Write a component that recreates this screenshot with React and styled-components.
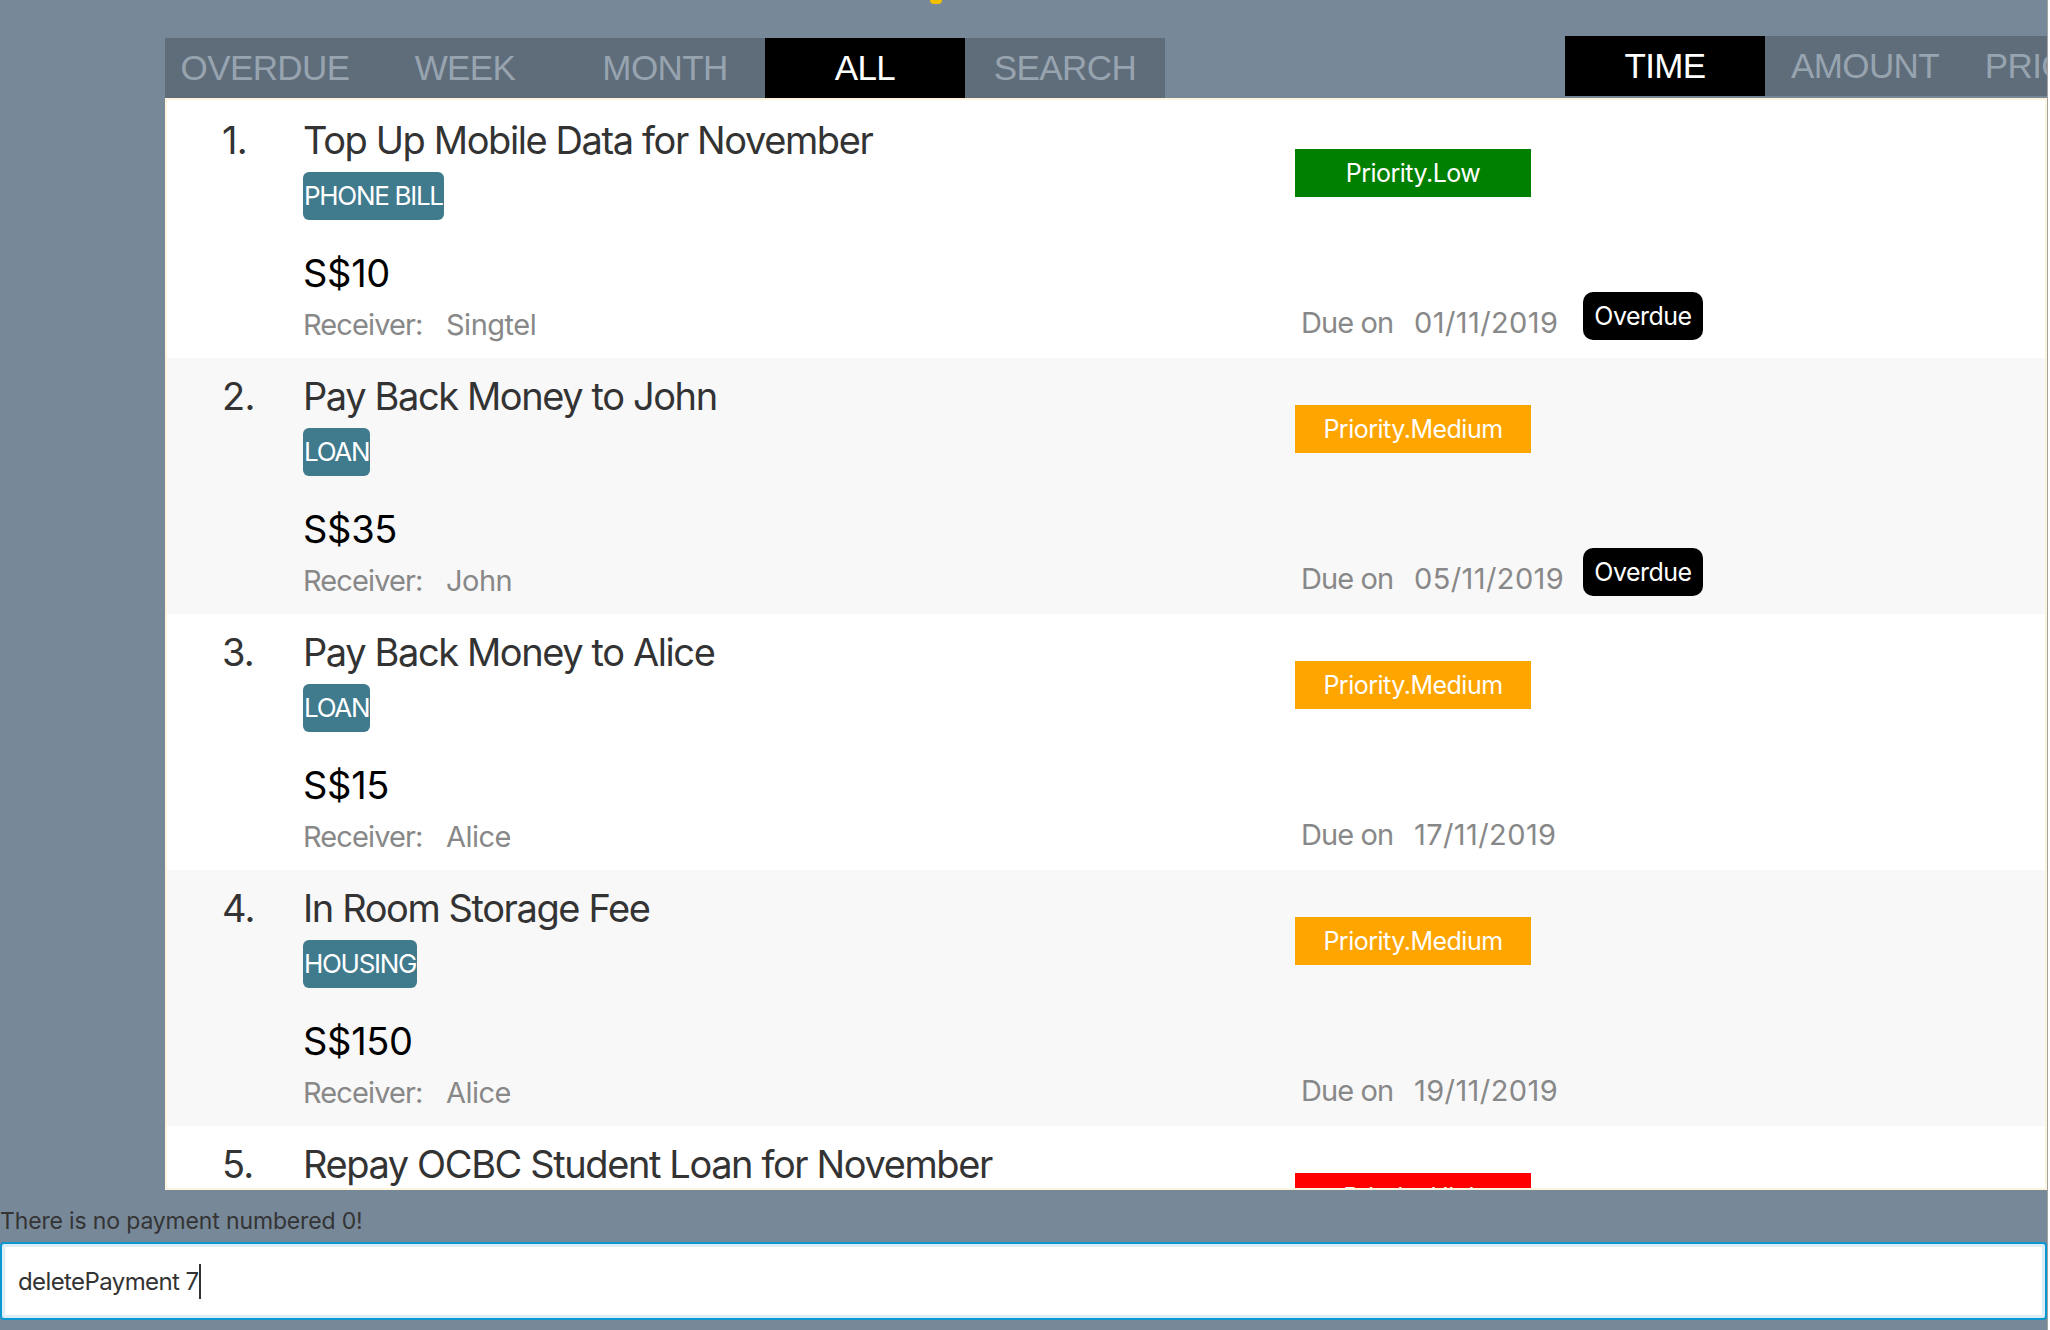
import React from 'react';
import styled, { createGlobalStyle } from 'styled-components';

const GlobalStyle = createGlobalStyle`
  html, body { margin: 0; padding: 0; background: #ffffff; }
  body { font-family: Inter, "Noto Sans", sans-serif; }
  * { box-sizing: border-box; }
`;

const Frame = styled.div`
  width: 2048px;
  height: 1330px;
  background: #778899;
  overflow: hidden;
  border-right: 1px solid #a3a3a3;
  display: flex;
  flex-direction: column;
`;

const Header = styled.div`
  flex: none;
  height: 36px;
  padding-left: 930px;
`;

const TitleTick = styled.div`
  width: 12px;
  height: 4px;
  background: #f2c200;
  border-radius: 0 0 7px 7px;
`;

const TabRow = styled.div`
  flex: none;
  height: 62px;
  display: flex;
  align-items: flex-start;
  padding-left: 165px;
  overflow: hidden;
`;

const TabBar = styled.div`
  flex: none;
  display: flex;
  background: #5f6d7a;
  margin-top: ${(p) => (p.$offset ? '2px' : '0')};
  margin-left: ${(p) => p.$gap || '0px'};
`;

const Tab = styled.div`
  width: 200px;
  height: 60px;
  display: flex;
  align-items: center;
  justify-content: center;
  font-family: "Liberation Sans", Arial, sans-serif;
  font-size: 35px;
  letter-spacing: -0.6px;
  color: ${(p) => (p.$active ? '#ffffff' : '#97a4b0')};
  background: ${(p) => (p.$active ? '#000000' : 'transparent')};
`;

const Panel = styled.div`
  flex: 1;
  margin-left: 165px;
  background: #ffffff;
  border: 2px solid #fcf4dc;
  padding-top: 2px;
  overflow: hidden;
  min-height: 0;
`;

const Row = styled.div`
  height: 256px;
  display: grid;
  grid-template-columns: 81px 992px 1fr;
  padding-left: 55px;
  background: ${(p) => (p.$alt ? '#f8f8f8' : '#ffffff')};
`;

const Index = styled.div`
  padding-top: 15px;
  font-size: 38px;
  line-height: 46px;
  color: #333333;
  letter-spacing: -0.8px;
`;

const Main = styled.div`
  display: flex;
  flex-direction: column;
  align-items: flex-start;
  padding-top: 15px;
`;

const Title = styled.div`
  font-size: 38px;
  line-height: 46px;
  color: #333333;
  letter-spacing: -1.4px;
  white-space: nowrap;
`;

const Tag = styled.div`
  margin-top: 9px;
  height: 48px;
  padding: 0 1px;
  border-radius: 6px;
  background: #3f7a8d;
  color: #ffffff;
  font-size: 26px;
  line-height: 48px;
  letter-spacing: -1.3px;
`;

const Amount = styled.div`
  margin-top: 30px;
  font-size: 38px;
  line-height: 46px;
  color: #000000;
  letter-spacing: -0.3px;
`;

const InfoLine = styled.div`
  display: flex;
  align-items: flex-end;
  font-size: 29px;
  line-height: 35px;
  color: #888888;
  letter-spacing: -0.5px;
`;

const ReceiverLine = styled(InfoLine)`
  margin-top: 11px;
`;

const Label = styled.span`
  width: ${(p) => p.$w};
  flex: none;
  letter-spacing: ${(p) => p.$ls || '-0.5px'};
`;

const Side = styled.div`
  display: flex;
  flex-direction: column;
  align-items: flex-start;
  padding-top: 47px;
  padding-bottom: 18px;
`;

const priorityColors = { Low: '#008000', Medium: '#ffa500', High: '#ff0000' };

const Priority = styled.div`
  width: 236px;
  height: 48px;
  display: flex;
  align-items: center;
  justify-content: center;
  background: ${(p) => priorityColors[p.$level]};
  color: #ffffff;
  font-size: 25px;
  letter-spacing: -0.5px;
`;

const DueLine = styled(InfoLine)`
  margin-top: auto;
  padding-left: 6px;
`;

const Overdue = styled.div`
  width: 120px;
  height: 48px;
  display: flex;
  align-items: center;
  justify-content: center;
  background: #000000;
  color: #ffffff;
  border-radius: 10px;
  font-size: 25px;
  letter-spacing: -0.5px;
`;

const Message = styled.div`
  flex: none;
  height: 52px;
  padding-top: 17px;
  font-size: 23px;
  line-height: 28px;
  color: #343434;
  letter-spacing: -0.15px;
  white-space: nowrap;
`;

const CommandBox = styled.div`
  flex: none;
  height: 78px;
  margin-bottom: 10px;
  display: flex;
  align-items: center;
  padding-left: 16px;
  background: #ffffff;
  border: 2px solid #0b98d1;
  border-radius: 4px;
  box-shadow: inset 0 0 0 3px #dcedf6;
  font-size: 24px;
  color: #333333;
  letter-spacing: -0.6px;
  white-space: pre;
`;

const Caret = styled.span`
  width: 2px;
  height: 35px;
  margin-left: 1px;
  background: #333333;
`;

const payments = [
  { title: 'Top Up Mobile Data for November', tag: 'PHONE BILL', amount: 'S$10', receiver: 'Singtel', priority: 'Low', due: '01/11/2019', overdue: true },
  { title: 'Pay Back Money to John', tag: 'LOAN', amount: 'S$35', receiver: 'John', priority: 'Medium', due: '05/11/2019', overdue: true },
  { title: 'Pay Back Money to Alice', tag: 'LOAN', amount: 'S$15', receiver: 'Alice', priority: 'Medium', due: '17/11/2019', overdue: false },
  { title: 'In Room Storage Fee', tag: 'HOUSING', amount: 'S$150', receiver: 'Alice', priority: 'Medium', due: '19/11/2019', overdue: false },
  { title: 'Repay OCBC Student Loan for November', tag: 'LOAN', amount: 'S$200', receiver: 'OCBC', priority: 'High', due: '30/11/2019', overdue: false },
];

export default function App() {
  return (
    <>
      <GlobalStyle />
      <Frame>
        <Header>
          <TitleTick />
        </Header>
        <TabRow>
          <TabBar $offset>
            <Tab>OVERDUE</Tab>
            <Tab>WEEK</Tab>
            <Tab>MONTH</Tab>
            <Tab $active>ALL</Tab>
            <Tab>SEARCH</Tab>
          </TabBar>
          <TabBar $gap="400px">
            <Tab $active>TIME</Tab>
            <Tab>AMOUNT</Tab>
            <Tab>PRIORITY</Tab>
          </TabBar>
        </TabRow>
        <Panel>
          {payments.map((p, i) => (
            <Row key={i} $alt={i % 2 === 1}>
              <Index>{i + 1}.</Index>
              <Main>
                <Title>{p.title}</Title>
                <Tag>{p.tag}</Tag>
                <Amount>{p.amount}</Amount>
                <ReceiverLine>
                  <Label $w="143px" $ls="-0.9px">Receiver:</Label>
                  <span>{p.receiver}</span>
                </ReceiverLine>
              </Main>
              <Side>
                <Priority $level={p.priority}>Priority.{p.priority}</Priority>
                <DueLine>
                  <Label $w="113px" $ls="-0.9px">Due on</Label>
                  <Label $w="169px" $ls="0.4px">{p.due}</Label>
                  {p.overdue && <Overdue>Overdue</Overdue>}
                </DueLine>
              </Side>
            </Row>
          ))}
        </Panel>
        <Message>There is no payment numbered 0!</Message>
        <CommandBox>
          deletePayment 7<Caret />
        </CommandBox>
      </Frame>
    </>
  );
}
